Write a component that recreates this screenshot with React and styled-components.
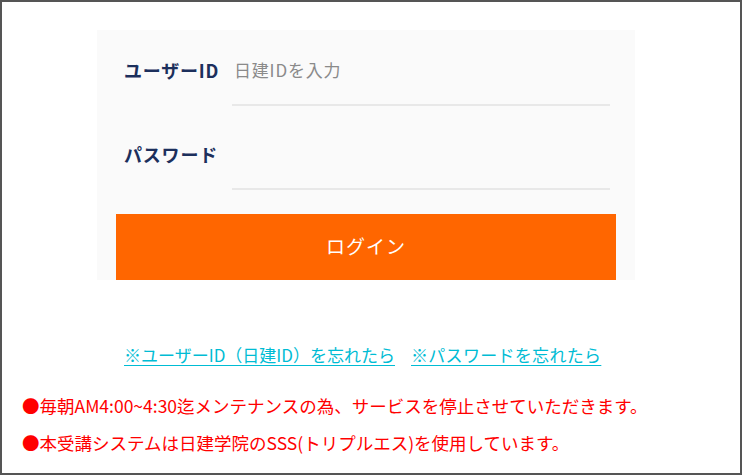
import React from "react";
import styled, { createGlobalStyle } from "styled-components";

const Global = createGlobalStyle`
  html, body { margin: 0; padding: 0; background: #ffffff; }
  body { font-family: "Noto Sans CJK JP", "Noto Sans", sans-serif; }
  * { box-sizing: border-box; }
`;

const Frame = styled.div`
  width: 742px;
  height: 475px;
  border: 2px solid #555555;
  background: #ffffff;
  overflow: hidden;
`;

const Panel = styled.form`
  margin: 28px 0 0 95px;
  width: 538px;
  height: 250px;
  background: #fafafa;
  padding: 28px 0 0 0;
  display: flex;
  flex-direction: column;
`;

const Field = styled.div`
  display: grid;
  grid-template-columns: 108px 378px;
  padding-left: 27px;
  margin-top: ${(p) => p.$gap || 0}px;
`;

const Label = styled.label`
  font-size: 18px;
  font-weight: 700;
  color: #1c2f5c;
  line-height: 24px;
  letter-spacing: 0.8px;
  white-space: nowrap;
`;

const Input = styled.input`
  border: none;
  border-bottom: 2px solid #e8e8e8;
  background: transparent;
  height: 48px;
  padding: 0 0 24px 2px;
  margin: 0;
  font-family: "Noto Sans CJK JP", "Noto Sans", sans-serif;
  font-size: 17px;
  line-height: 24px;
  color: #333;
  letter-spacing: 0.8px;
  outline: none;
  &::placeholder { color: #8a8a8a; }
`;

const Button = styled.button`
  margin: 24px 0 0 19px;
  width: 500px;
  height: 67px;
  border: none;
  background: #ff6600;
  color: #ffffff;
  font-family: "Noto Sans CJK JP", "Noto Sans", sans-serif;
  font-size: 19px;
  letter-spacing: 1px;
  padding: 0 0 4px 0;
  cursor: pointer;
`;

const Links = styled.div`
  display: flex;
  gap: 16px;
  margin-top: 63px;
  padding-left: 122px;
`;

const Link = styled.a`
  color: #00bcd4;
  font-size: 17px;
  line-height: 24px;
  letter-spacing: ${(p) => p.$spacing || 0}px;
  text-decoration: underline;
  text-underline-offset: 3px;
  white-space: nowrap;
`;

const Notices = styled.div`
  margin-top: 20px;
  padding-left: 20px;
`;

const Notice = styled.p`
  margin: 0;
  color: #ff0000;
  font-size: 17.5px;
  line-height: 37px;
  white-space: nowrap;
`;

export default function App() {
  return (
    <>
      <Global />
      <Frame>
        <Panel onSubmit={(e) => e.preventDefault()}>
          <Field>
            <Label>ユーザーID</Label>
            <Input placeholder="日建IDを入力" />
          </Field>
          <Field $gap={36}>
            <Label>パスワード</Label>
            <Input type="password" />
          </Field>
          <Button type="submit">ログイン</Button>
        </Panel>
        <Links>
          <Link href="#">※ユーザーID（日建ID）を忘れたら</Link>
          <Link href="#" $spacing={0.3}>※パスワードを忘れたら</Link>
        </Links>
        <Notices>
          <Notice>●毎朝AM4:00~4:30迄メンテナンスの為、サービスを停止させていただきます。</Notice>
          <Notice>●本受講システムは日建学院のSSS(トリプルエス)を使用しています。</Notice>
        </Notices>
      </Frame>
    </>
  );
}
